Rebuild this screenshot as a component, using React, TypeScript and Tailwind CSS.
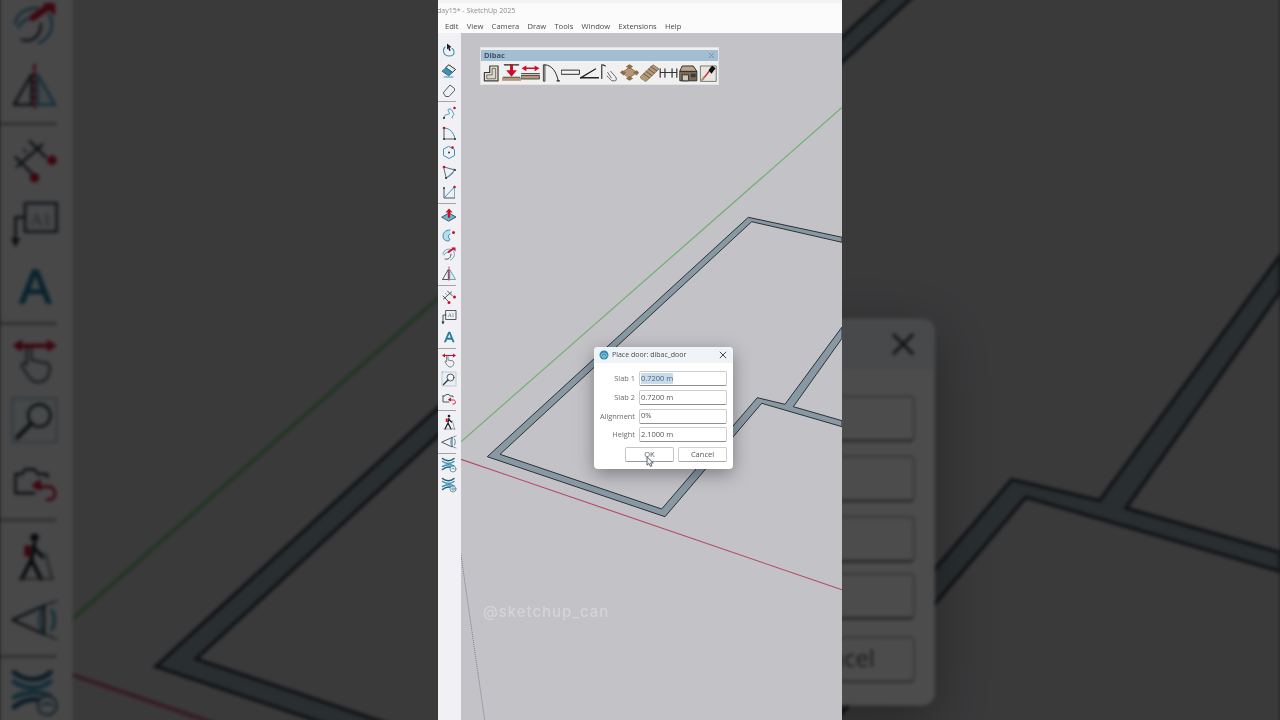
import React from "react";

const T = "#3b93b5";
const D = "#27343d";
const R = "#c8102e";

function Ic({ children, size = 16 }: { children: React.ReactNode; size?: number }) {
  return (
    <svg width={size} height={size} viewBox="0 0 16 16" fill="none" strokeLinecap="round" strokeLinejoin="round">
      {children}
    </svg>
  );
}

const dot = (x: number, y: number, c = R, r = 1.3) => <circle cx={x} cy={y} r={r} fill={c} />;

const Section = ({ inner }: { inner: React.ReactNode }) => (
  <Ic>
    <path d="M1.500 1.500C5 4.500 10 4.500 13 1.500" stroke="#1f5f7c" strokeWidth="1.500" />
    <path d="M1.500 4.500C5 7 10 7 13 4.500" stroke={T} strokeWidth="1.500" />
    <path d="M1.500 9.500C5 7.500 10 7.500 13 9" stroke={T} strokeWidth="1.500" />
    <path d="M1.500 12.500C5 9.800 8 9.800 10 10.300" stroke="#1f5f7c" strokeWidth="1.500" />
    <circle cx="12" cy="12" r="3" fill="#eef2f4" stroke="#51707f" strokeWidth=".7" />
    {inner}
  </Ic>
);

const sideGroups: React.ReactNode[][] = [
  [
    <Ic key="a"><path d="M4 5C1 8 2.500 14 8 14c3.500 0 5.500-1.500 5-4.500C12.800 8 12 7 11 6.500" stroke={T} strokeWidth="1.100" /><path d="M6 1.500l4.500 3.500-1.800.7.900 2.800-1.400.4-.9-2.700-1.300 1.300z" fill="#16202a" /></Ic>,
    <Ic key="b"><path d="M1.500 9L8 3l6.500 4.500L8 13.500z" fill={T} stroke={D} strokeWidth=".9" /><path d="M1.500 9L5 5.700l6.500 4.500L8 13.500z" fill={T} /><path d="M8 3l6.500 4.500-3 2.700L5 5.700z" fill="#e6f1f5" stroke={D} strokeWidth=".8" /><path d="M3 15h9" stroke={T} strokeWidth="1" /></Ic>,
    <Ic key="c"><path d="M2.500 10.500L9 3l4.500 3.500v2L8 14.500H5z" stroke="#44606e" strokeWidth="1" /></Ic>,
  ],
  [
    <Ic key="a"><path d="M3 13c0-4 3-3 5-4s-3-4 0-5 4 5 5 5-3 3-2 4" stroke={T} strokeWidth="1" />{dot(13.500, 3)}{dot(3, 13, D, 1.100)}</Ic>,
    <Ic key="b"><path d="M3 3v11h11" stroke={D} strokeWidth=".8" /><path d="M3 3c6 0 10 5 11 11" stroke={T} strokeWidth="1" />{dot(3, 3)}{dot(3, 14, D, 1)}{dot(14, 14, D, 1)}</Ic>,
    <Ic key="c"><path d="M8 2.500l5.500 3v6L8 14.500l-5.500-3v-6z" stroke={T} strokeWidth="1" />{dot(8, 8.500, D, 1)}{dot(11.500, 3.500)}</Ic>,
    <Ic key="d"><path d="M3 3l11 3-8.500 8z" stroke={D} strokeWidth=".7" /><path d="M13 5c0 4-3 7-7.500 8.500" stroke={T} strokeWidth="1" />{dot(3, 3)}{dot(14, 6, D, 1)}{dot(5, 14, D, 1)}</Ic>,
    <Ic key="e"><path d="M3 4v10h10.500" stroke={D} strokeWidth=".8" /><path d="M3.500 13.500L13 3.500" stroke={T} strokeWidth="1" /><path d="M13.500 4v10" stroke={T} strokeWidth=".7" />{dot(13.500, 3)}{dot(3, 4, D, .9)}</Ic>,
  ],
  [
    <Ic key="a"><path d="M1 10l7-4 7 4-7 4z" fill="#6cb6d0" stroke={D} strokeWidth=".8" /><path d="M8 10V5" stroke={R} strokeWidth="2.200" /><path d="M4.500 5.500L8 1.500l3.500 4z" fill={R} /></Ic>,
    <Ic key="b"><path d="M9 3C4 3 2 6 2 9s2 5 5 5c2 0 2-2 1-3s-1-3 1-4" fill="#b9dde9" stroke={T} strokeWidth="1" />{dot(12.500, 5.500, R, 1.500)}</Ic>,
    <Ic key="c"><path d="M2 8c0-3 3-5 7-5" stroke={T} strokeWidth=".8" /><path d="M3 9c1-2 3-3 5-3M12.500 5c2 3 1 7-3 9" stroke={T} strokeWidth=".8" /><path d="M4 13c3 1 6-1 6-5" stroke={D} strokeWidth=".8" /><path d="M7.500 6L12.500 2.500" stroke={R} strokeWidth="2" /><path d="M10.500 1.500h4v4z" fill={R} /></Ic>,
    <Ic key="d"><path d="M7 4L1.500 13.500H7z" stroke={D} strokeWidth=".8" /><path d="M9 4l5.500 9.500H9z" fill="#dcebf0" stroke={T} strokeWidth=".8" /><path d="M8 1v14" stroke={R} strokeWidth=".9" strokeDasharray="1.200 1.200" /></Ic>,
  ],
  [
    <Ic key="a"><path d="M2 7l5 5M6.500 2l5 5M2.500 10l8-7" stroke={D} strokeWidth=".8" /><path d="M4.500 4.500l1 1" stroke="#777" strokeWidth=".7" />{dot(13.500, 8, R, 1.500)}{dot(8, 13.500, R, 1.500)}</Ic>,
    <Ic key="b"><rect x="5" y="1.500" width="10" height="9" stroke="#3f4e58" strokeWidth=".9" /><text x="10" y="8.300" textAnchor="middle" fontSize="5.500" fontFamily="'Liberation Serif', serif" fill="#6a7780">A1</text><path d="M5 6H2v8" stroke={D} strokeWidth=".8" /><path d="M.5 12.500h3L2 15.500z" fill={D} /></Ic>,
    <Ic key="c"><text x="8.300" y="14" textAnchor="middle" fontSize="15" fontWeight="400" fontFamily="'Liberation Sans', sans-serif" fill="#1f7898" stroke="#1f7898" strokeWidth=".5">A</text></Ic>,
  ],
  [
    <Ic key="a"><path d="M5.500 7V4.500c0-1 1.500-1 1.500 0V8l5 1c1 .5 1 2 .5 3.500S11 15 9 15s-3-2-5-5c-.5-1 1-1.500 1.500-.5z" stroke="#5a6870" strokeWidth=".8" /><path d="M3 3.500h10" stroke={R} strokeWidth="1.200" /><path d="M4 1.500l-3 2 3 2zM12 1.500l3 2-3 2z" fill={R} /></Ic>,
    <Ic key="b"><rect x="1" y="1" width="14" height="14" fill="#e9f0f4" stroke="#9bb1bc" strokeWidth=".6" strokeDasharray="1 .8" /><circle cx="9.500" cy="6.500" r="3.500" fill="#f3f7f9" stroke={D} strokeWidth=".8" /><path d="M7 9l-4.500 4.500" stroke={D} strokeWidth="1.300" /></Ic>,
    <Ic key="c"><path d="M2 5h2l1-1.500h3L9 5h3v1M2 5v6h6" stroke={D} strokeWidth=".8" /><path d="M12 13h1c2 0 2-4-.5-4H8" stroke={R} strokeWidth=".9" /><path d="M10 6.500v4L7 8.500z" fill={R} /></Ic>,
  ],
  [
    <Ic key="a"><circle cx="8" cy="2" r="1.300" fill="#16202a" /><path d="M8 4l-1 5-3 6M7 9l3 6M7.500 5l3 3" stroke="#16202a" strokeWidth="1.200" /><path d="M11.500 7l2 8M3 15h11" stroke="#555" strokeWidth=".5" /><rect x="4.800" y="4.500" width="2" height="3.500" fill={R} /></Ic>,
    <Ic key="b"><path d="M1 8l10-4.500v9z" stroke={D} strokeWidth=".8" /><path d="M11 3.500c-2 3-2 6 0 9" stroke={T} strokeWidth=".7" /><path d="M13.500 5c1 2 1 4 0 6" stroke={T} strokeWidth="1" /><path d="M11 3.500l4-1.500M11 12.500l4 1.500" stroke={D} strokeWidth=".6" strokeDasharray="1 1" /></Ic>,
  ],
  [
    <Section key="a" inner={<path d="M10.500 12c.5-1 2.500-1 3 0" stroke={T} strokeWidth=".8" />} />,
    <Section key="b" inner={<circle cx="12" cy="12" r="1.200" stroke={T} strokeWidth=".8" />} />,
  ],
];

const TAN = "#b39777";
const BR = "#8d6b47";
const S = 19;
const dibacIcons: React.ReactNode[] = [
  <Ic key="1" size={S}><path d="M2 15V8H6.500V2.500h7V15z" fill="#e8e2d6" stroke="#3c3a36" strokeWidth="1" /><path d="M4 13V10H8.500V4.500h3V13z" fill="#d9d6d0" stroke="#6d675d" strokeWidth=".8" /></Ic>,
  <Ic key="2" size={S}><path d="M2 1.500h12" stroke="#222" strokeWidth="1" /><path d="M0 15h16v-2.500H0z" fill={TAN} /><path d="M1 12h14" stroke="#222" strokeWidth=".7" /><path d="M8 2v5" stroke={R} strokeWidth="2.500" /><path d="M3.500 6h9L8 11.500z" fill={R} /></Ic>,
  <Ic key="3" size={S}><path d="M3 4.500h10" stroke={R} strokeWidth="1.300" /><path d="M4.500 2L.5 4.500l4 2.500zM11.500 2l4 2.500-4 2.500z" fill={R} /><path d="M.5 9h15" stroke="#222" strokeWidth=".8" /><path d="M.5 10.500h15v3H.5z" fill={TAN} stroke="#222" strokeWidth=".6" /></Ic>,
  <Ic key="4" size={S}><path d="M2 15V1.500h1.300V15z" fill="#ddd" stroke="#222" strokeWidth=".7" /><path d="M3.500 1.500c6 .5 9.500 6 11 13.500" stroke="#222" strokeWidth=".8" /><path d="M13.500 15h2" stroke="#222" strokeWidth="1" /></Ic>,
  <Ic key="5" size={S}><rect x="0.500" y="6" width="15" height="3.500" fill="#f4f4f4" stroke="#222" strokeWidth=".8" /></Ic>,
  <Ic key="6" size={S}><path d="M.5 12.500L13 5" stroke="#222" strokeWidth="1.100" /><path d="M.5 12.500h15" stroke="#222" strokeWidth="1.300" /></Ic>,
  <Ic key="7" size={S}><path d="M1.500 13V1.500c1 0 2 .3 3 1" stroke="#222" strokeWidth=".9" /><path d="M6.500 8l3 4.500M9 7l4 4.500c1 1.500 1 3 0 3.500h-3c-1-1-2.500-2-4-4" stroke="#4a4a4a" strokeWidth=".7" /></Ic>,
  <Ic key="8" size={S}><path d="M2 8l6-4.500L14 8l-6 4.500z" fill={TAN} stroke={BR} strokeWidth=".8" /><path d="M5 3l3-2 3 2-3 2zM0 8l2-2 3 2-2 2.500zM11 8l3-2 2 2-2 2.500zM5 13l3-2 3 2-3 2z" fill={BR} /></Ic>,
  <Ic key="9" size={S}><path d="M0 12L11 1.500 16 5 5 15.500z" fill={TAN} stroke="#6f5a42" strokeWidth=".6" /><path d="M3 9l5 3.500M5 7l5 3.500M7 5l5 3.500M9 3l5 3.500" stroke="#6f5a42" strokeWidth=".8" /></Ic>,
  <Ic key="10" size={S}><path d="M1 5v7M15 5v7M5 5v7M11 5v7M1 8h14" stroke="#333" strokeWidth="1" /></Ic>,
  <Ic key="11" size={S}><path d="M1 7h14v8H1z" fill="#7a6a55" stroke="#2a2a2a" strokeWidth=".8" /><path d="M3 2.500h9L15 7H1z" fill="#b8a78c" stroke="#2a2a2a" strokeWidth=".8" /><path d="M3 10h5v5H3z" fill="#cfc7b8" stroke="#2a2a2a" strokeWidth=".7" /><path d="M10 9h4v3h-4z" fill="#3a3a3a" /></Ic>,
  <Ic key="12" size={S}><rect x="1.500" y="2.500" width="13" height="13" fill="#e9e6de" stroke="#666" strokeWidth=".7" /><path d="M3 14L8.500 7" stroke={R} strokeWidth="1.100" /><path d="M8 6l3-4 3 2.500-3.500 4.500z" fill="#111" /><path d="M2 15l2-3" stroke={TAN} strokeWidth="1.500" /></Ic>,
];

function Row({ label, value, selected }: { label: string; value: string; selected?: boolean }) {
  return (
    <div className="flex h-[15px] items-center justify-end gap-[4px]">
      <span className="whitespace-nowrap text-[7.400px] text-[#6b6b6b]">{label}</span>
      <div className="flex h-[15px] w-[88px] shrink-0 items-center rounded-[2px] border border-[#cdcdcd] border-b-[#8f8f8f] bg-white pl-[1px] text-[7.500px] text-[#555]">
        <span className={selected ? "bg-[#c9dcec] text-[#4d6478]" : ""}>{value}</span>
      </div>
    </div>
  );
}

function Dialog() {
  return (
    <div className="absolute left-[133px] top-[314px] flex h-[122px] w-[139px] flex-col rounded-[4px] bg-white shadow-[0_5px_18px_rgba(0,0,0,0.35)]">
      <div className="flex h-[16px] items-center rounded-t-[4px] bg-[#eff4f8] pl-[5px] pr-[6px]">
        <svg width="10" height="10" viewBox="0 0 10 10" fill="none">
          <circle cx="5" cy="5" r="4.500" fill="#2f8db3" />
          <path d="M2.200 6.500c-.5-4.500 6-4.500 5.600 0M3.700 7.800c-.5-3.500 3-3.500 2.600 0M5 5.500v3" stroke="#e4f2f8" strokeWidth=".6" />
        </svg>
        <span className="ml-[3px] flex-1 whitespace-nowrap text-[7px] text-[#4a4a4a]">Place door: dibac_door</span>
        <svg width="8" height="8" viewBox="0 0 8 8" stroke="#333" strokeWidth=".9"><path d="M.8.8l6.400 6.400M7.200.8L.8 7.200" /></svg>
      </div>
      <div className="flex flex-col gap-[3.800px] px-[6px] pt-[8px]">
        <Row label="Slab 1" value="0.7200 m" selected />
        <Row label="Slab 2" value="0.7200 m" />
        <Row label="Alignment" value="0%" />
        <Row label="Height" value="2.1000 m" />
        <div className="mt-[1px] flex justify-end gap-[4px]">
          <div className="relative flex h-[15px] w-[49px] items-center justify-center rounded-[2px] border border-[#c4c4c4] border-b-[#9a9a9a] text-[7.500px] text-[#555]">
            OK
            <svg className="absolute left-[20px] top-[8px]" width="9" height="12" viewBox="0 0 9 12" fill="#eef1f3" stroke="#3a4650" strokeWidth=".8"><path d="M1 .8v8.400l2-1.700 1.400 3 1.600-.7-1.400-2.900h2.700z" /></svg>
          </div>
          <div className="flex h-[15px] w-[49px] items-center justify-center rounded-[2px] border border-[#d0d0d0] border-b-[#aaa] text-[7.500px] text-[#555]">Cancel</div>
        </div>
      </div>
    </div>
  );
}

function DibacBar() {
  return (
    <div className="absolute left-[20px] top-[15px] flex h-[36px] w-[237px] flex-col bg-[#f0f0f0] pt-[2px] shadow-[0_0_0_1px_#e2e2e4]">
      <div className="flex h-[11px] items-center justify-between bg-[#a3bed3] px-[3px]">
        <span className="text-[7.500px] font-bold text-[#3d5269]">Dibac</span>
        <svg width="7" height="7" viewBox="0 0 6 6" stroke="#6a8bad" strokeWidth=".8"><path d="M.8.8l4.400 4.400M5.200.8L.8 5.200" /></svg>
      </div>
      <div className="flex flex-1 items-center gap-[0.700px] pl-[1px]">
        {dibacIcons}
      </div>
    </div>
  );
}

function Scene() {
  return (
    <svg className="absolute inset-0 h-full w-full" viewBox="461 33 381 687" fill="none">
      <path d="M461 441.700L842 107.500" stroke="#70b070" strokeWidth="1.200" />
      <path d="M461 459.300L842 589.800" stroke="#b4485f" strokeWidth="1.100" />
      <path d="M460.700 553L484.700 720" stroke="#7d7d90" strokeWidth="1" strokeDasharray="1 1" />
      <path
        fillRule="evenodd"
        d="M487.300 456.700L748.300 217.300L842 237.300V242.300L751.700 221.700L500 454.300L661.700 509L757.300 397.700L785 404.300L842 327V338.300L793.300 406.700L842 420.700V426.700L761.700 403.300L665 516.700Z"
        fill="#8999a3"
        stroke="#2a3238"
        strokeWidth="1"
        strokeLinejoin="miter"
      />
    </svg>
  );
}

function Frame() {
  return (
    <div className="flex h-[720px] w-[404px] flex-col overflow-hidden bg-white font-['Open_Sans','Noto_Sans',sans-serif] blur-[0.35px]">
      <div className="flex h-[18px] items-end overflow-hidden border-t-[3px] border-[#f3f3f3] bg-[#fbfbfb] pb-[2px] text-[7px] text-[#8c8c8c]">
        <span className="-ml-[1px] whitespace-nowrap">day15* - SketchUp 2025</span>
      </div>
      <div className="flex h-[15px] items-center gap-[8.250px] bg-[#fbfbfb] pl-[7px] pt-[2.500px] text-[7.600px] text-[#4a4a4a]">
        <span>Edit</span><span>View</span><span>Camera</span><span>Draw</span><span>Tools</span><span>Window</span><span>Extensions</span><span>Help</span>
      </div>
      <div className="flex min-h-0 flex-1">
        <div className="flex w-[23px] shrink-0 flex-col bg-[#f1f1f5] pt-[7.500px]">
          {sideGroups.map((g, i) => (
            <React.Fragment key={i}>
              {i > 0 && <div className="my-[1.250px] h-px w-[18px] shrink-0 bg-[#a4a4a6]" />}
              {g.map((ic, j) => (
                <div key={j} className="flex h-[19.700px] w-[22px] shrink-0 items-center justify-center">{ic}</div>
              ))}
            </React.Fragment>
          ))}
        </div>
        <div className="relative flex-1 bg-[#c2c2c7]">
          <Scene />
          <DibacBar />
          <Dialog />
          <div className="absolute left-[22px] top-[568px] font-['Inter',sans-serif] text-[15px] font-medium tracking-[0.950px] text-[#d5d4d9]">@sketchup_can</div>
        </div>
      </div>
    </div>
  );
}

export default function App() {
  return (
    <div className="relative flex h-[720px] w-[1280px] items-center justify-center overflow-hidden bg-[#3c3c3e]">
      <div aria-hidden className="absolute inset-0 flex items-center justify-center">
        <div className="scale-[3.17] blur-[0.5px]">
          <Frame />
        </div>
      </div>
      <div className="absolute inset-0 bg-black/70" />
      <div className="relative">
        <Frame />
      </div>
    </div>
  );
}
